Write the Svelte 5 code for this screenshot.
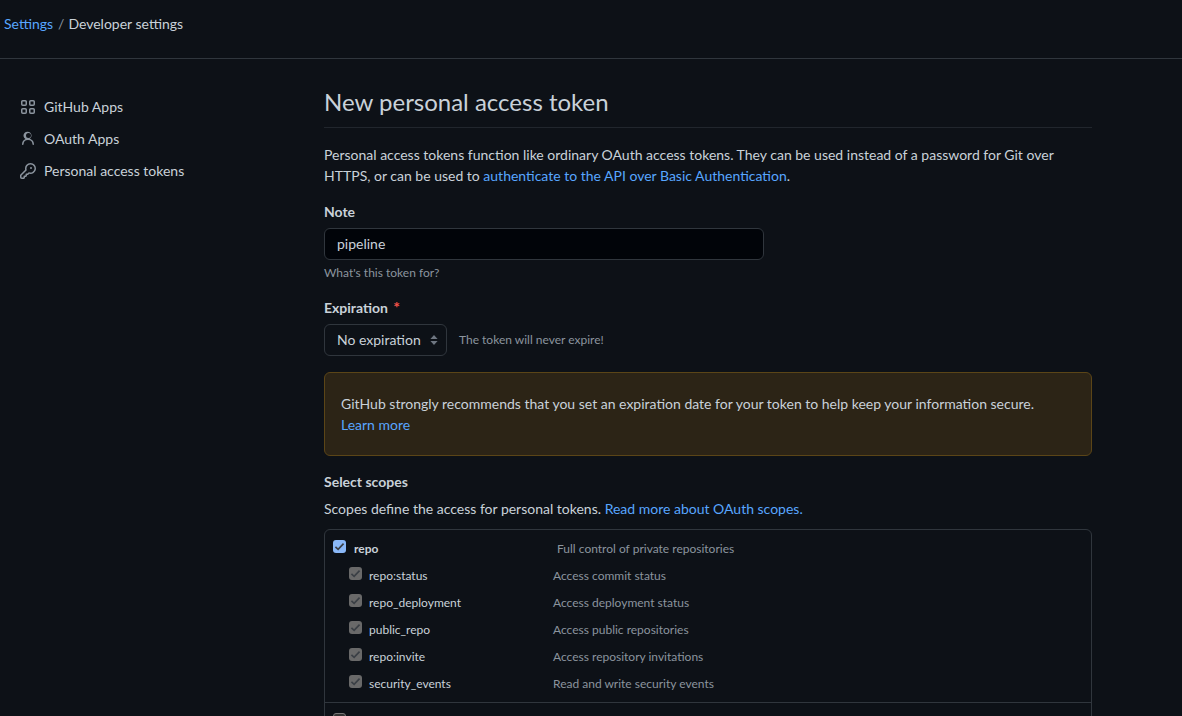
<script>
  const children = [
    ['repo:status', 'Access commit status'],
    ['repo_deployment', 'Access deployment status'],
    ['public_repo', 'Access public repositories'],
    ['repo:invite', 'Access repository invitations'],
    ['security_events', 'Read and write security events']
  ];
</script>

<div class="page">
  <header class="top">
    <a class="link" href="#s">Settings</a><span class="sep">/</span><span>Developer settings</span>
  </header>
  <div class="layout">
    <nav class="side">
      <div class="item">
        <svg viewBox="0 0 16 16" width="16" height="16"><path d="M1 2.75C1 1.784 1.784 1 2.75 1h2.5C6.216 1 7 1.784 7 2.75v2.5A1.75 1.75 0 0 1 5.25 7h-2.5A1.75 1.75 0 0 1 1 5.25Zm1.75-.25a.25.25 0 0 0-.25.25v2.5c0 .138.112.25.25.25h2.5a.25.25 0 0 0 .25-.25v-2.5a.25.25 0 0 0-.25-.25ZM9 2.75C9 1.784 9.784 1 10.75 1h2.5C14.216 1 15 1.784 15 2.75v2.5A1.75 1.75 0 0 1 13.25 7h-2.5A1.75 1.75 0 0 1 9 5.25Zm1.75-.25a.25.25 0 0 0-.25.25v2.5c0 .138.112.25.25.25h2.5a.25.25 0 0 0 .25-.25v-2.5a.25.25 0 0 0-.25-.25ZM1 10.75C1 9.784 1.784 9 2.75 9h2.5C6.216 9 7 9.784 7 10.75v2.5A1.75 1.75 0 0 1 5.25 15h-2.5A1.75 1.75 0 0 1 1 13.25Zm1.75-.25a.25.25 0 0 0-.25.25v2.5c0 .138.112.25.25.25h2.5a.25.25 0 0 0 .25-.25v-2.5a.25.25 0 0 0-.25-.25ZM9 10.75C9 9.784 9.784 9 10.75 9h2.5c.966 0 1.75.784 1.75 1.75v2.5A1.75 1.75 0 0 1 13.25 15h-2.5A1.75 1.75 0 0 1 9 13.25Zm1.75-.25a.25.25 0 0 0-.25.25v2.5c0 .138.112.25.25.25h2.5a.25.25 0 0 0 .25-.25v-2.5a.25.25 0 0 0-.25-.25Z"/></svg>
        <span>GitHub Apps</span>
      </div>
      <div class="item">
        <svg viewBox="0 0 16 16" width="16" height="16"><path d="M10.561 8.073a6.005 6.005 0 0 1 3.432 5.142.75.75 0 1 1-1.498.07 4.5 4.5 0 0 0-8.99 0 .75.75 0 0 1-1.498-.07 6.004 6.004 0 0 1 3.431-5.142 3.999 3.999 0 1 1 4.123 0ZM11 4.5a2.5 2.5 0 1 0-5 0 2.5 2.5 0 0 0 5 0Z"/></svg>
        <span>OAuth Apps</span>
      </div>
      <div class="item">
        <svg viewBox="0 0 16 16" width="16" height="16"><path d="M10.5 0a5.499 5.499 0 1 1-1.288 10.848l-.932.932a.749.749 0 0 1-.53.22H7v.75a.749.749 0 0 1-.22.53l-.5.5a.749.749 0 0 1-.53.22H5v.75a.749.749 0 0 1-.22.53l-.5.5a.749.749 0 0 1-.53.22h-2A1.75 1.75 0 0 1 0 14.25v-2c0-.199.079-.389.22-.53l4.932-4.932A5.5 5.5 0 0 1 10.5 0Zm-4 5.5c-.001.431.069.86.205 1.269a.75.75 0 0 1-.181.768L1.5 12.56v1.69c0 .138.112.25.25.25h1.69l.06-.06v-1.19a.75.75 0 0 1 .75-.75h1.19l.06-.06v-1.19a.75.75 0 0 1 .75-.75h1.19l1.023-1.025a.75.75 0 0 1 .768-.18A4 4 0 1 0 6.5 5.5ZM11 6a1 1 0 1 1 0-2 1 1 0 0 1 0 2Z"/></svg>
        <span>Personal access tokens</span>
      </div>
    </nav>
    <main class="main">
      <h1>New personal access token</h1>
      <p class="intro">Personal access tokens function like ordinary OAuth access tokens. They can be used instead of a password for Git over HTTPS, or can be used to <a class="link" href="#a">authenticate to the API over Basic Authentication</a>.</p>

      <div class="label note-label">Note</div>
      <div class="input">pipeline</div>
      <div class="hint">What's this token for?</div>

      <div class="label exp-label">Expiration <span class="req">*</span></div>
      <div class="exp-row">
        <div class="select">
          <span>No expiration</span>
          <svg viewBox="0 0 16 16" width="16" height="16"><path d="M8 3 11.6 7H4.4ZM8 13 4.4 9H11.6Z"/></svg>
        </div>
        <span class="hint-inline">The token will never expire!</span>
      </div>

      <div class="flash">GitHub strongly recommends that you set an expiration date for your token to help keep your information secure.<br /><a class="link" href="#l">Learn more</a></div>

      <div class="label">Select scopes</div>
      <p class="scopes-intro">Scopes define the access for personal tokens. <a class="link" href="#o">Read more about OAuth scopes.</a></p>

      <div class="box">
        <div class="group">
          <div class="row parent">
            <span class="check on"><svg viewBox="0 0 16 16" width="13" height="13"><path d="M3 8.5 6.3 11.6 13 4.4" /></svg></span>
            <span class="name">repo</span>
            <span class="desc">Full control of private repositories</span>
          </div>
          {#each children as [name, desc]}
            <div class="row child">
              <span class="check dis"><svg viewBox="0 0 16 16" width="13" height="13"><path d="M3 8.5 6.3 11.6 13 4.4" /></svg></span>
              <span class="cname">{name}</span>
              <span class="desc">{desc}</span>
            </div>
          {/each}
        </div>
        <div class="group next">
          <div class="row parent"><span class="check off"></span></div>
        </div>
      </div>
    </main>
  </div>
</div>

<style>
  :global(body) {
    margin: 0;
    background: #0d1117;
  }
  .page {
    height: 716px;
    overflow: hidden;
    background: #0d1117;
    color: #c9d1d9;
    font-family: Lato, "Noto Sans", sans-serif;
    font-size: 14px;
    line-height: 21px;
  }
  .link {
    color: #58a6ff;
    text-decoration: none;
  }
  .top {
    height: 46px;
    border-bottom: 1px solid #30363d;
    padding: 0 0 12px 4px;
    display: flex;
    align-items: center;
  }
  .sep {
    margin: 0 4px 0 5px;
    color: #8b949e;
  }
  .layout {
    display: grid;
    grid-template-columns: 324px 768px;
  }
  .side {
    padding: 32px 0 0 20px;
  }
  .item {
    display: flex;
    align-items: center;
    gap: 8px;
    height: 32px;
  }
  .item span {
    padding-bottom: 2px;
  }
  .item svg {
    fill: #8b949e;
    flex: none;
  }
  .main {
    padding-top: 25px;
  }
  h1 {
    margin: 0;
    font-size: 24px;
    font-weight: 400;
    line-height: 36px;
    padding-bottom: 7px;
    border-bottom: 1px solid #21262d;
    color: #c9d1d9;
  }
  .intro {
    margin: 16px 0 0;
  }
  .label {
    font-weight: 700;
  }
  .note-label {
    margin-top: 15px;
  }
  .input {
    margin-top: 6px;
    width: 440px;
    height: 32px;
    box-sizing: border-box;
    background: #010409;
    border: 1px solid #30363d;
    border-radius: 6px;
    padding: 4px 12px;
  }
  .hint {
    font-size: 12px;
    line-height: 18px;
    color: #8b949e;
    margin-top: 4px;
  }
  .exp-label {
    margin-top: 15px;
  }
  .req {
    color: #f85149;
    margin-left: 2px;
    font-size: 16px;
    line-height: 0;
  }
  .exp-row {
    display: flex;
    align-items: center;
    gap: 12px;
    margin-top: 6px;
  }
  .select {
    width: 123px;
    height: 32px;
    box-sizing: border-box;
    border: 1px solid #30363d;
    border-radius: 6px;
    padding: 0 4px 2px 12px;
    display: flex;
    align-items: center;
    justify-content: space-between;
    white-space: nowrap;
  }
  .select svg {
    fill: #6e7681;
    margin-top: 2px;
  }
  .hint-inline {
    font-size: 12px;
    color: #8b949e;
    padding-bottom: 2px;
  }
  .flash {
    margin-top: 16px;
    height: 84px;
    box-sizing: border-box;
    padding: 20px 16px;
    background: #2c2416;
    border: 1px solid #5b4517;
    border-radius: 6px;
  }
  .flash + .label {
    margin-top: 15px;
  }
  .scopes-intro {
    margin: 6px 0 0;
  }
  .box {
    margin-top: 10px;
    border: 1px solid #30363d;
    border-radius: 6px;
  }
  .group {
    padding-top: 5px;
    padding-bottom: 5px;
  }
  .next {
    border-top: 1px solid #30363d;
  }
  .row {
    display: flex;
    height: 27px;
    align-items: center;
    font-size: 12px;
    position: relative;
  }
  .parent {
    padding-left: 8px;
  }
  .child {
    padding-left: 24px;
  }
  .check {
    width: 13px;
    height: 13px;
    border-radius: 3px;
    flex: none;
    display: block;
    margin-top: -4px;
  }
  .check svg {
    display: block;
    fill: none;
    stroke: #3a3f45;
    stroke-width: 2;
  }
  .on {
    background: #8ab8f8;
  }
  .dis {
    background: #696969;
  }
  .off {
    background: #333;
    border: 1px solid #777;
    box-sizing: border-box;
  }
  .name {
    font-weight: 700;
    margin-left: 8px;
    width: 203px;
  }
  .cname {
    margin-left: 7px;
    width: 184px;
  }
  .desc {
    color: #8b949e;
  }
</style>
